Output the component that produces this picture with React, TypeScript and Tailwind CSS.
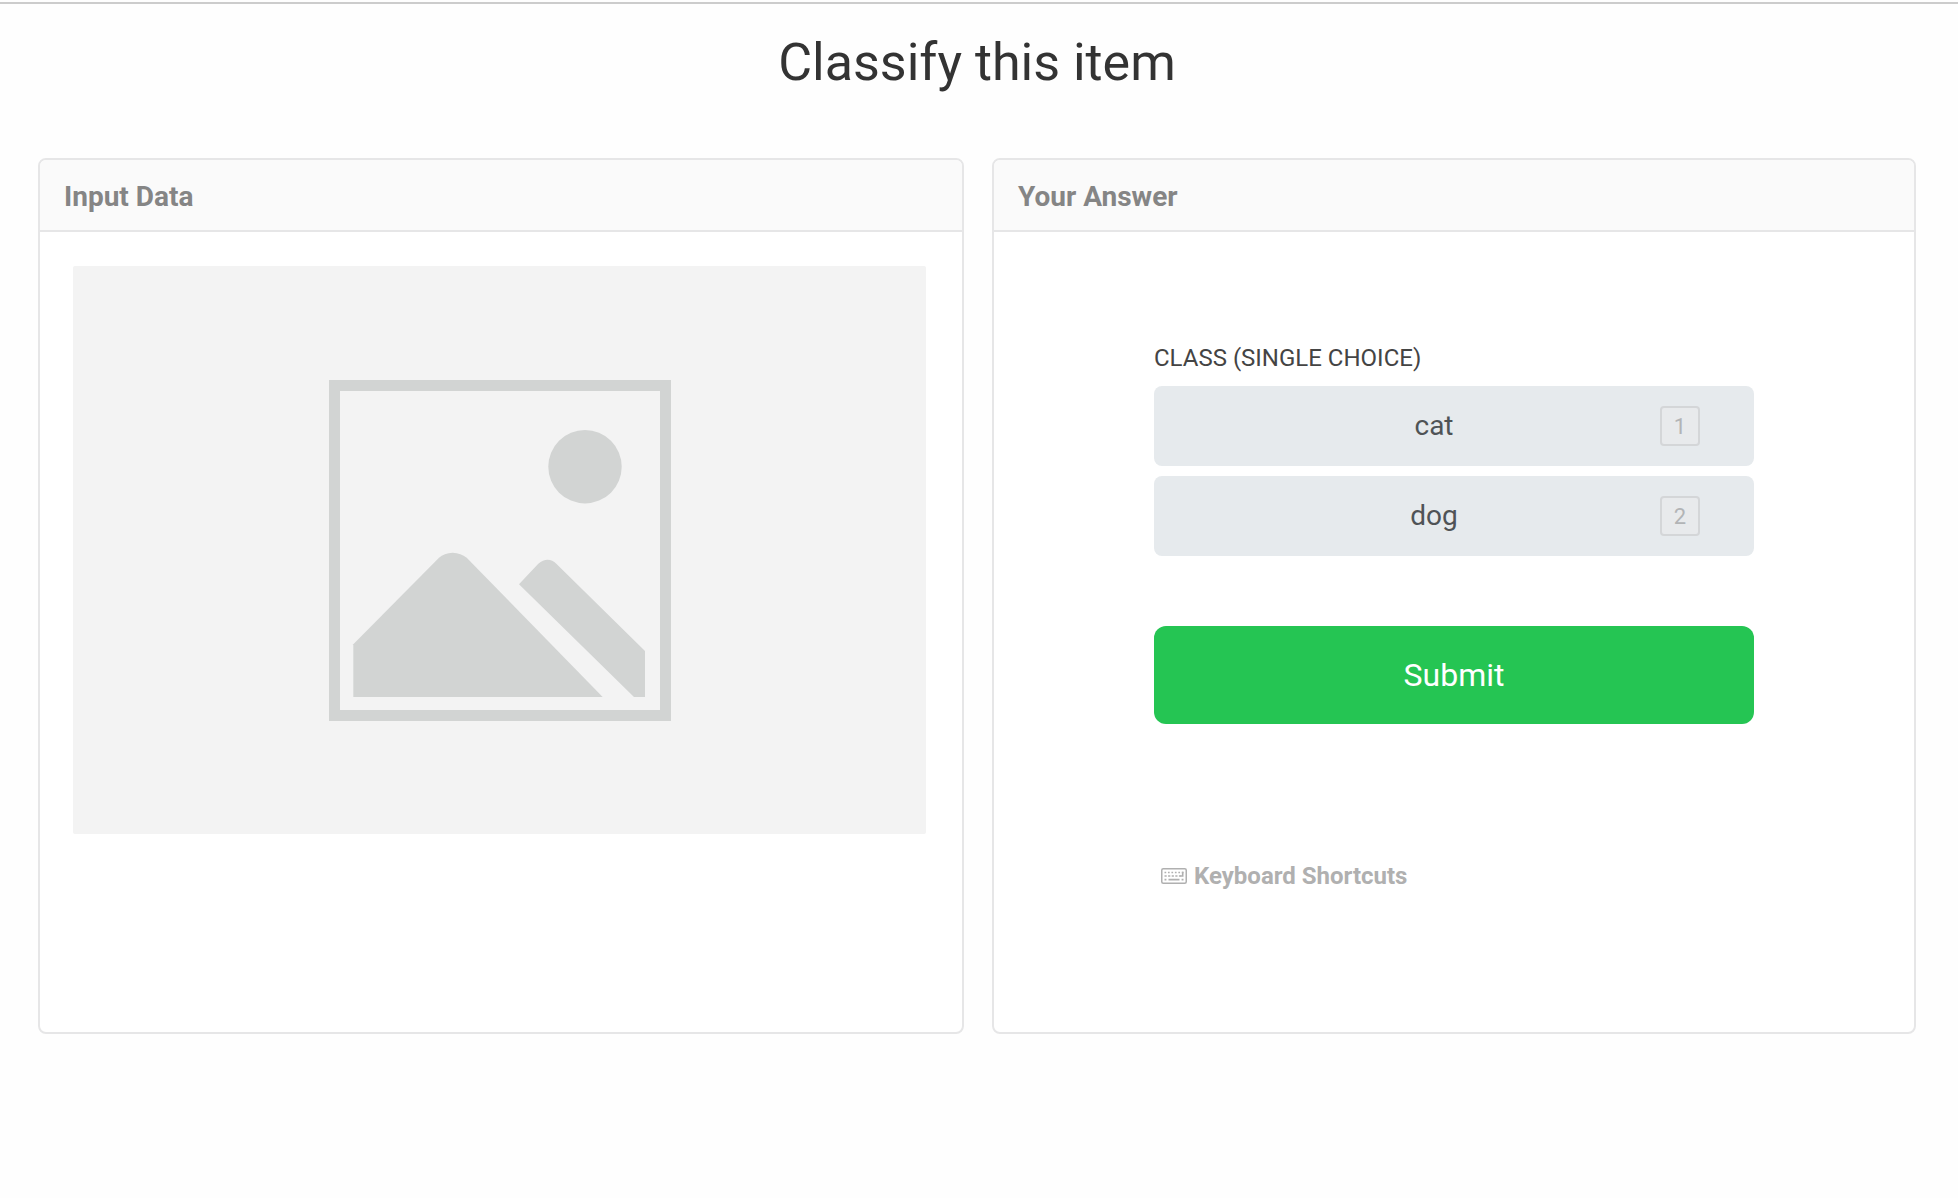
import { useState, type ReactNode } from "react";

function Panel({ title, children }: { title: string; children: ReactNode }) {
  return (
    <section className="flex min-h-[876px] flex-col overflow-hidden rounded-lg border-2 border-[#e6e6e7] bg-white">
      <h2 className="border-b-2 border-[#e6e6e7] bg-[#fafafa] px-6 pt-[17px] pb-[13px] text-[28px] leading-10 font-bold text-[#858585]">
        {title}
      </h2>
      {children}
    </section>
  );
}

function PlaceholderImage() {
  return (
    <svg viewBox="0 0 853 568" className="block w-full" role="img" aria-label="Item to classify">
      <rect width="853" height="568" rx="2" fill="#f3f3f3" />
      <rect x="261.5" y="119.5" width="331" height="330" fill="none" stroke="#d2d4d3" strokeWidth="11" />
      <g fill="#d2d4d3">
        <circle cx="512" cy="200.7" r="36.7" />
        <path d="M280.3 378.3 L366 291.7 Q371 287 379.7 286.7 Q388 287 393.7 291.7 L529.7 431 H280.3 Z" />
        <path d="M446 318.3 L465.3 297.7 Q470 293.7 474.6 293.7 Q479.5 293.7 483.3 297.7 L572 385 V431 H561 Z" />
      </g>
    </svg>
  );
}

function KeyboardIcon() {
  return (
    <svg viewBox="0 0 26 16" className="h-4 w-[26px] shrink-0" fill="none" stroke="currentColor" aria-hidden="true">
      <rect x="0.75" y="0.75" width="24.5" height="14.5" rx="1.5" strokeWidth="1.5" />
      <path d="M3.5 4.5H22.5" strokeWidth="1.7" strokeDasharray="1.7 1.76" />
      <path d="M3.5 8H20" strokeWidth="1.7" strokeDasharray="2.2 1.4" />
      <path d="M3.5 11.6H5.4M7.5 11.6H18.5M20.6 11.6H22.5" strokeWidth="1.7" />
      <path d="M21.7 3.7V8H19.5" strokeWidth="1.6" />
    </svg>
  );
}

const choices = ["cat", "dog"];

export default function App() {
  const [selected, setSelected] = useState<string | null>(null);

  return (
    <div className="min-h-screen bg-[#fefefe] pt-0.5 font-[Roboto,sans-serif]">
      <main className="border-t-2 border-[#cccccc] pr-[42px] pl-[38px]">
        <h1 className="pt-[25px] pb-[61px] text-center text-[52px] leading-[68px] text-[#333333]">Classify this item</h1>

        <div className="grid grid-cols-[463fr_462fr] gap-7">
          <Panel title="Input Data">
            <div className="pt-[34px] pr-9 pl-[33px]">
              <PlaceholderImage />
            </div>
          </Panel>

          <Panel title="Your Answer">
            <form
              className="mx-auto w-full max-w-[600px] pt-[109px]"
              onSubmit={(event) => event.preventDefault()}
            >
              <fieldset>
                <legend className="mb-[11px] text-2xl leading-[34px] text-[#444444]">CLASS (SINGLE CHOICE)</legend>
                <div className="flex flex-col gap-2.5">
                  {choices.map((choice, index) => (
                    <button
                      key={choice}
                      type="button"
                      aria-pressed={selected === choice}
                      onClick={() => setSelected(choice)}
                      className="flex h-20 items-center rounded-lg bg-[#e6eaed] px-[54px] text-[28px] text-[#4f5356]"
                    >
                      <span className="flex-1 text-center">{choice}</span>
                      <kbd className="flex size-10 items-center justify-center rounded border-2 border-[#d4d6d8] bg-[#e8eaec] font-[Roboto,sans-serif] text-[22px] text-[#b2b4b6]">
                        {index + 1}
                      </kbd>
                    </button>
                  ))}
                </div>
              </fieldset>
              <button
                type="submit"
                className="mt-[70px] h-[98px] w-full rounded-xl bg-[#25c553] text-[32px] text-white"
              >
                Submit
              </button>
              <button
                type="button"
                className="mt-[134px] ml-[7px] flex items-center gap-[7px] text-2xl leading-9 font-bold text-[#b0b0b0]"
              >
                <KeyboardIcon />
                Keyboard Shortcuts
              </button>
            </form>
          </Panel>
        </div>
      </main>
    </div>
  );
}
